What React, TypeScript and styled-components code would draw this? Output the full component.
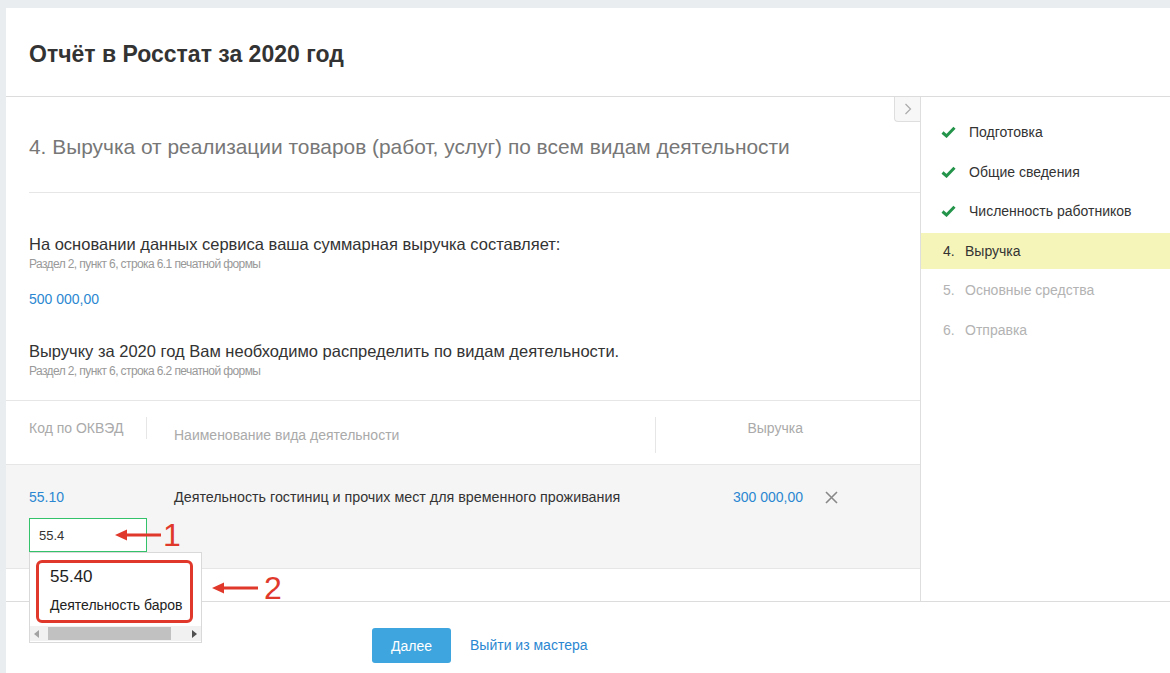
import React from "react";
import styled, { createGlobalStyle } from "styled-components";

const BLUE = "#2b87d1";
const RED = "#e0392b";

const GlobalStyle = createGlobalStyle`
  html, body { margin: 0; padding: 0; }
  body {
    background: #e9edf0;
    font-family: "Liberation Sans", Arial, sans-serif;
    color: #333;
  }
  * { box-sizing: border-box; }
`;

type Step = { id: string; label: string; state: "done" | "active" | "todo"; num?: number };

const steps: Step[] = [
  { id: "prep", label: "Подготовка", state: "done" },
  { id: "common", label: "Общие сведения", state: "done" },
  { id: "staff", label: "Численность работников", state: "done" },
  { id: "rev", label: "Выручка", state: "active", num: 4 },
  { id: "assets", label: "Основные средства", state: "todo", num: 5 },
  { id: "send", label: "Отправка", state: "todo", num: 6 },
];

const Shell = styled.div`
  margin: 8px 0 0 6px;
  height: 665px;
  background: #fff;
  display: flex;
  flex-direction: column;
`;

const Header = styled.div`
  height: 89px;
  padding: 4px 0 0 23px;
  display: flex;
  align-items: center;
  border-bottom: 1px solid #dcdcdc;
  h1 {
    margin: 0;
    font-size: 23px;
    font-weight: bold;
    color: #333;
  }
`;

const Body = styled.div`
  display: flex;
  height: 504px;
`;

const Main = styled.div`
  width: 914px;
  position: relative;
`;

const Collapse = styled.div`
  position: absolute;
  top: 0;
  right: 0;
  width: 26px;
  height: 25px;
  background: #f7f7f7;
  border: 1px solid #dedede;
  border-top: none;
  border-right: none;
  border-radius: 0 0 0 4px;
  display: flex;
  align-items: center;
  justify-content: center;
`;

const SectionTitle = styled.div`
  margin-left: 23px;
  padding: 38px 0 33px;
  border-bottom: 1px solid #e6e6e6;
  font-size: 20.9px;
  line-height: 24px;
  color: #777;
`;

const Info = styled.div`
  padding: 0 23px 22px;
  border-bottom: 1px solid #e6e6e6;
`;

const Lead = styled.div<{ $gap: number }>`
  margin-top: ${(p) => p.$gap}px;
  font-size: 16.5px;
  line-height: 18px;
  color: #333;
`;

const Note = styled.div`
  margin-top: 4px;
  font-size: 12px;
  letter-spacing: -0.6px;
  line-height: 14px;
  color: #999;
`;

const Amount = styled.div`
  margin-top: 20px;
  font-size: 14px;
  line-height: 16px;
  color: ${BLUE};
`;

const Grid = styled.div<{ $head?: boolean }>`
  display: grid;
  grid-template-columns: 118px 509px 147px 1fr;
  padding-left: 23px;
  align-items: start;
  background: ${(p) => (p.$head ? "#fff" : "#f5f5f5")};
  border-bottom: 1px solid #e6e6e6;
  height: ${(p) => (p.$head ? 64 : 104)}px;
  padding-top: ${(p) => (p.$head ? 16 : 24)}px;
`;

const HeadCell = styled.div<{ $h: number; $sep?: boolean; $right?: boolean; $center?: boolean; $pl?: number }>`
  height: ${(p) => p.$h}px;
  border-right: ${(p) => (p.$sep ? "1px solid #e6e6e6" : "none")};
  padding-left: ${(p) => p.$pl || 0}px;
  display: flex;
  align-items: ${(p) => (p.$center ? "center" : "flex-start")};
  justify-content: ${(p) => (p.$right ? "flex-end" : "flex-start")};
  padding-top: ${(p) => (p.$center ? 0 : 3)}px;
  font-size: 14px;
  line-height: 16px;
  color: #aaa;
`;

const Cell = styled.div<{ $right?: boolean; $pl?: number; $blue?: boolean }>`
  position: relative;
  padding-left: ${(p) => p.$pl || 0}px;
  text-align: ${(p) => (p.$right ? "right" : "left")};
  font-size: ${(p) => (p.$blue ? 14 : 14.3)}px;
  line-height: 16px;
  color: ${(p) => (p.$blue ? BLUE : "#333")};
`;

const InputWrap = styled.div`
  position: relative;
  margin-top: 13px;
  width: 118px;
`;

const CodeInput = styled.input`
  width: 118px;
  height: 34px;
  border: 1px solid #33c26a;
  background: #fff;
  padding: 0 9px;
  font: 13px "Liberation Sans", Arial, sans-serif;
  color: #333;
  outline: none;
`;

const Dropdown = styled.div`
  position: absolute;
  top: 34px;
  left: 0;
  width: 173px;
  height: 91px;
  background: #fff;
  border: 1px solid #d9d9d9;
  z-index: 5;
  padding: 7px 0 0 6px;
`;

const Marked = styled.div`
  width: 157px;
  height: 63px;
  border: 3px solid ${RED};
  border-radius: 6px;
  padding: 4px 0 0 11px;
  .code {
    font-size: 17px;
    line-height: 20px;
    color: #222;
  }
  .name {
    margin-top: 10px;
    font-size: 14px;
    line-height: 16px;
    color: #222;
    white-space: nowrap;
  }
`;

const HScroll = styled.div`
  position: absolute;
  left: 0;
  right: 0;
  bottom: 1px;
  height: 15px;
  background: #f1f1f1;
  display: flex;
  align-items: center;
  padding: 0 4px;
  .thumb {
    margin-left: 9px;
    width: 123px;
    height: 13px;
    background: #c1c1c1;
  }
  .sp { flex: 1; }
`;

const Callout = styled.div<{ $x: number; $y: number; $gap: number }>`
  position: absolute;
  left: ${(p) => p.$x}px;
  top: ${(p) => p.$y}px;
  display: flex;
  align-items: center;
  gap: ${(p) => p.$gap}px;
  z-index: 6;
  span {
    font-size: 32px;
    line-height: 32px;
    color: ${RED};
  }
`;

const Remove = styled.div`
  padding: 1px 0 0 22px;
`;

const Sidebar = styled.div`
  flex: 1;
  border-left: 1px solid #dedede;
  padding-top: 17px;
  display: flex;
  flex-direction: column;
  gap: 3.6px;
`;

const StepItem = styled.div<{ $state: Step["state"] }>`
  height: 36px;
  display: flex;
  align-items: center;
  padding-left: ${(p) => (p.$state === "done" ? 20 : 22)}px;
  background: ${(p) => (p.$state === "active" ? "#f6f5b9" : "transparent")};
  font-size: 14px;
  color: ${(p) => (p.$state === "todo" ? "#b3b3b3" : "#333")};
  .mark {
    width: 28px;
    display: flex;
  }
  .num {
    width: 22px;
  }
`;

const Footer = styled.div`
  flex: 1;
  border-top: 1px solid #dcdcdc;
  padding: 26px 0 0 366px;
  display: flex;
  align-items: flex-start;
  gap: 19px;
`;

const NextButton = styled.button`
  height: 35px;
  width: 79px;
  border: none;
  border-radius: 3px;
  background: #3ea5de;
  color: #fff;
  font: 14px "Liberation Sans", Arial, sans-serif;
`;

const ExitLink = styled.a`
  line-height: 35px;
  font-size: 14px;
  color: ${BLUE};
  text-decoration: none;
`;

const Check = () => (
  <svg width="15" height="12" viewBox="0 0 15 12">
    <path d="M1.5 6.5 L5.5 10 L13.5 1.8" fill="none" stroke="#23944a" strokeWidth="3" strokeLinejoin="miter" />
  </svg>
);

const Arrow = () => (
  <svg width="46" height="12" viewBox="0 0 46 12">
    <path d="M0 6 L12 0.5 L12 11.5 Z" fill={RED} />
    <line x1="10" y1="6" x2="46" y2="6" stroke={RED} strokeWidth="3" />
  </svg>
);

export default function App() {
  return (
    <>
      <GlobalStyle />
      <Shell>
        <Header>
          <h1>Отчёт в Росстат за 2020 год</h1>
        </Header>
        <Body>
          <Main>
            <Collapse>
              <svg width="8" height="12" viewBox="0 0 8 12">
                <path d="M1.5 1 L6.5 6 L1.5 11" fill="none" stroke="#aaa" strokeWidth="1.2" />
              </svg>
            </Collapse>
            <SectionTitle>
              4. Выручка от реализации товаров (работ, услуг) по всем видам деятельности
            </SectionTitle>
            <Info>
              <Lead $gap={42}>На основании данных сервиса ваша суммарная выручка составляет:</Lead>
              <Note>Раздел 2, пункт 6, строка 6.1 печатной формы</Note>
              <Amount>500 000,00</Amount>
              <Lead $gap={35}>Выручку за 2020 год Вам необходимо распределить по видам деятельности.</Lead>
              <Note>Раздел 2, пункт 6, строка 6.2 печатной формы</Note>
            </Info>
            <Grid $head>
              <HeadCell $h={22} $sep>Код по ОКВЭД</HeadCell>
              <HeadCell $h={36} $sep $center $pl={27}>Наименование вида деятельности</HeadCell>
              <HeadCell $h={22} $right>Выручка</HeadCell>
              <div />
            </Grid>
            <Grid>
              <Cell $blue>
                55.10
                <InputWrap>
                  <CodeInput defaultValue="55.4" />
                  <Callout $x={86} $y={1} $gap={2}>
                    <Arrow />
                    <span>1</span>
                  </Callout>
                  <Callout $x={183} $y={54} $gap={6}>
                    <Arrow />
                    <span>2</span>
                  </Callout>
                  <Dropdown>
                    <Marked>
                      <div className="code">55.40</div>
                      <div className="name">Деятельность баров</div>
                    </Marked>
                    <HScroll>
                      <svg width="5" height="8" viewBox="0 0 5 8">
                        <path d="M5 0 L0 4 L5 8 Z" fill="#a3a3a3" />
                      </svg>
                      <div className="thumb" />
                      <div className="sp" />
                      <svg width="5" height="8" viewBox="0 0 5 8">
                        <path d="M0 0 L5 4 L0 8 Z" fill="#505050" />
                      </svg>
                    </HScroll>
                  </Dropdown>
                </InputWrap>
              </Cell>
              <Cell $pl={27}>Деятельность гостиниц и прочих мест для временного проживания</Cell>
              <Cell $right $blue>300 000,00</Cell>
              <Remove>
                <svg width="13" height="13" viewBox="0 0 13 13">
                  <path d="M1 1 L12 12 M12 1 L1 12" stroke="#888" strokeWidth="1.6" />
                </svg>
              </Remove>
            </Grid>
          </Main>
          <Sidebar>
            {steps.map((s) => (
              <StepItem key={s.id} $state={s.state}>
                {s.state === "done" ? (
                  <span className="mark">
                    <Check />
                  </span>
                ) : (
                  <span className="num">{s.num}.</span>
                )}
                {s.label}
              </StepItem>
            ))}
          </Sidebar>
        </Body>
        <Footer>
          <NextButton>Далее</NextButton>
          <ExitLink href="#">Выйти из мастера</ExitLink>
        </Footer>
      </Shell>
    </>
  );
}
